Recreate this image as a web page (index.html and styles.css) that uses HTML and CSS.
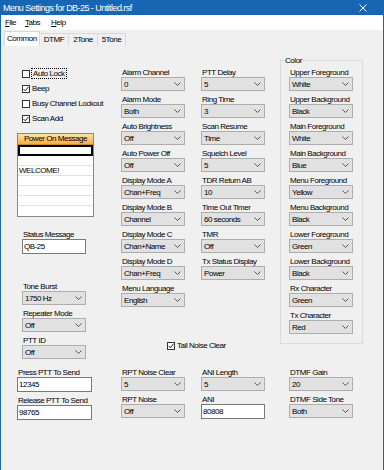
FILE: index.html
```html
<!DOCTYPE html>
<html lang="en">
<head>
  <meta charset="UTF-8">
  <meta name="viewport" content="width=device-width, initial-scale=1.0">
  <title>Menu Settings for DB-25</title>
  <link rel="stylesheet" href="styles.css">
</head>
<body>
  <div class="window">
    <div class="titlebar">
      <span class="title">Menu Settings for DB-25 - Untitled.rsf</span>
      <svg class="close" width="8" height="8" viewBox="0 0 8 8"><path d="M0.5 0.5L7.5 7.5M7.5 0.5L0.5 7.5" stroke="#fff" stroke-width="1"/></svg>
    </div>
    <div class="menubar">
      <span class="menu-file"><u>F</u>ile</span>
      <span class="menu-tabs"><u>T</u>abs</span>
      <span><u>H</u>elp</span>
    </div>
    <div class="tabs">
      <span class="tab active">Common</span>
      <span class="tab">DTMF</span>
      <span class="tab">2Tone</span>
      <span class="tab">5Tone</span>
    </div>

    <div class="page">
      <div class="grid">
        <!-- left column -->
        <div class="col left">
          <div class="check"><span class="box"></span><span class="focus">Auto Lock</span></div>
          <div class="check"><span class="box"><svg width="6" height="6" viewBox="0 0 6 6"><polyline points="0.5,3 2.3,4.8 5.5,0.8" fill="none" stroke="#222" stroke-width="1"/></svg></span>Beep</div>
          <div class="check"><span class="box"></span>Busy Channel Lockout</div>
          <div class="check"><span class="box"><svg width="6" height="6" viewBox="0 0 6 6"><polyline points="0.5,3 2.3,4.8 5.5,0.8" fill="none" stroke="#222" stroke-width="1"/></svg></span>Scan Add</div>

          <div class="listbox">
            <div class="listbox-head">Power On Message</div>
            <div class="listbox-edit"></div>
            <div class="listbox-row"></div>
            <div class="listbox-row">WELCOME!</div>
            <div class="listbox-row"></div>
            <div class="listbox-row"></div>
            <div class="listbox-row"></div>
            <div class="listbox-row"></div>
          </div>

          <div class="field status">
            <span class="lbl">Status Message</span>
            <div class="input">QB-25</div>
          </div>
          <div class="field burst">
            <span class="lbl">Tone Burst</span>
            <div class="select"><span>1750 Hz</span><svg class="chev" width="7" height="4" viewBox="0 0 7 4"><polyline points="0.5,0.5 3.5,3.5 6.5,0.5" fill="none" stroke="#555"/></svg></div>
          </div>
          <div class="field">
            <span class="lbl">Repeater Mode</span>
            <div class="select"><span>Off</span><svg class="chev" width="7" height="4" viewBox="0 0 7 4"><polyline points="0.5,0.5 3.5,3.5 6.5,0.5" fill="none" stroke="#555"/></svg></div>
          </div>
          <div class="field">
            <span class="lbl">PTT ID</span>
            <div class="select"><span>Off</span><svg class="chev" width="7" height="4" viewBox="0 0 7 4"><polyline points="0.5,0.5 3.5,3.5 6.5,0.5" fill="none" stroke="#555"/></svg></div>
          </div>
        </div>

        <!-- middle column -->
        <div class="col mid" id="colMid"></div>

        <!-- right column -->
        <div class="col mid" id="colRight"></div>

        <!-- color group -->
        <fieldset class="color">
          <legend>Color</legend>
          <div id="colColor"></div>
        </fieldset>
      </div>

      <div class="grid bottom">
        <div class="col">
          <div class="field wide">
            <span class="lbl">Press PTT To Send</span>
            <div class="input">12345</div>
          </div>
          <div class="field wide">
            <span class="lbl">Release PTT To Send</span>
            <div class="input">98765</div>
          </div>
        </div>
        <div class="col" id="botMid"></div>
        <div class="col">
          <div class="field">
            <span class="lbl">ANI Length</span>
            <div class="select"><span>5</span><svg class="chev" width="7" height="4" viewBox="0 0 7 4"><polyline points="0.5,0.5 3.5,3.5 6.5,0.5" fill="none" stroke="#555"/></svg></div>
          </div>
          <div class="field">
            <span class="lbl">ANI</span>
            <div class="input">80808</div>
          </div>
        </div>
        <div class="col dtmf" id="botDtmf"></div>
      </div>
    </div>
  </div>

  <script>
    // Combo boxes, label + current value
    const chevron = '<svg class="chev" width="7" height="4" viewBox="0 0 7 4"><polyline points="0.5,0.5 3.5,3.5 6.5,0.5" fill="none" stroke="#555"/></svg>';

    function combo(label, value) {
      return `<div class="field"><span class="lbl">${label}</span><div class="select"><span>${value}</span>${chevron}</div></div>`;
    }

    function fill(id, items) {
      document.getElementById(id).innerHTML = items.map(i => combo(i[0], i[1])).join('');
    }

    fill('colMid', [
      ['Alarm Channel', '0'],
      ['Alarm Mode', 'Both'],
      ['Auto Brightness', 'Off'],
      ['Auto Power Off', 'Off'],
      ['Display Mode A', 'Chan+Freq'],
      ['Display Mode B', 'Channel'],
      ['Display Mode C', 'Chan+Name'],
      ['Display Mode D', 'Chan+Freq'],
      ['Menu Language', 'English']
    ]);

    fill('colRight', [
      ['PTT Delay', '5'],
      ['Ring Time', '3'],
      ['Scan Resume', 'Time'],
      ['Squelch Level', '5'],
      ['TDR Return AB', '10'],
      ['Time Out Timer', '60 seconds'],
      ['TMR', 'Off'],
      ['Tx Status Display', 'Power']
    ]);

    fill('colColor', [
      ['Upper Foreground', 'White'],
      ['Upper Background', 'Black'],
      ['Main Foreground', 'White'],
      ['Main Background', 'Blue'],
      ['Menu Foreground', 'Yellow'],
      ['Menu Background', 'Black'],
      ['Lower Foreground', 'Green'],
      ['Lower Background', 'Black'],
      ['Rx Character', 'Green'],
      ['Tx Character', 'Red']
    ]);

    fill('botMid', [
      ['RPT Noise Clear', '5'],
      ['RPT Noise', 'Off']
    ]);

    fill('botDtmf', [
      ['DTMF Gain', '20'],
      ['DTMF Side Tone', 'Both']
    ]);

    // Tail Noise Clear sits under the middle column
    const tail = document.createElement('div');
    tail.className = 'check tail';
    tail.innerHTML = '<span class="box"><svg width="6" height="6" viewBox="0 0 6 6"><polyline points="0.5,3 2.3,4.8 5.5,0.8" fill="none" stroke="#222" stroke-width="1"/></svg></span>Tail Noise Clear';
    document.getElementById('colMid').appendChild(tail);
  </script>
</body>
</html>
```

FILE: styles.css
```css
* {
  box-sizing: border-box;
}
body {
  margin: 0;
  background: #f0f0f0;
  font-family: "Liberation Sans", Arial, sans-serif;
  font-size: 8px;
  letter-spacing: -0.45px;
  color: #000;
}
.window {
  width: 384px;
  height: 470px;
  border-left: 1px solid #1666b4;
  border-right: 1px solid #1666b4;
  display: flex;
  flex-direction: column;
  overflow: hidden;
}
.titlebar {
  height: 15px;
  background: #1666b4;
  color: #fff;
  display: flex;
  align-items: center;
  justify-content: space-between;
  padding: 0 16px 0 2px;
}
.title {
  font-size: 9px;
  letter-spacing: -0.55px;
}
.menubar {
  height: 15px;
  background: #fff;
  display: flex;
  align-items: center;
  padding-left: 4px;
}
.menu-file {
  width: 20px;
}
.menu-tabs {
  width: 26px;
}
.tabs {
  height: 16px;
  display: flex;
  align-items: flex-end;
  padding-left: 3px;
}
.tab {
  height: 13px;
  line-height: 12px;
  padding: 0 4px;
  border: 1px solid #d9d9d9;
  border-bottom: none;
  margin-right: -1px;
}
.tab.active {
  height: 15px;
  line-height: 14px;
  padding: 0 2px;
  background: #fff;
}
.page {
  flex: 1;
  padding: 10px 0 0 16px;
}
.grid {
  display: grid;
  grid-template-columns: 104px 80px 79px 83px;
  align-items: start;
}
.left {
  margin-top: 10px;
}
.mid {
  margin-top: 12px;
}
.check {
  display: flex;
  align-items: center;
  height: 15px;
  white-space: nowrap;
}
.left .check {
  margin-left: 5px;
}
.box {
  width: 8px;
  height: 8px;
  border: 1px solid #333;
  background: #fff;
  margin-right: 2px;
  display: flex;
  align-items: center;
  justify-content: center;
}
.focus {
  outline: 1px dotted #000;
  padding: 0 1px;
  line-height: 9px;
}
.tail {
  height: 11px;
  margin-top: 33px;
  margin-left: 46px;
}
.listbox {
  width: 77px;
  margin-top: 7px;
  border: 1px solid #828790;
  background: #fff;
}
.listbox-head {
  height: 11px;
  line-height: 10px;
  text-align: center;
  background: linear-gradient(#fde2ae, #f2b045);
  border-bottom: 1px solid #c98a2e;
}
.listbox-edit {
  height: 11px;
  border: 2px solid #000;
}
.listbox-row {
  height: 10px;
  line-height: 10px;
  padding-left: 1px;
  border-bottom: 1px solid #e2e2e2;
}
.listbox-row:last-child {
  border-bottom: none;
}
.field {
  margin-bottom: 4px;
}
.left .field {
  margin-left: 5px;
}
.status {
  margin-top: 13px;
}
.burst {
  margin-top: 28px;
}
.lbl {
  display: block;
  height: 9px;
  line-height: 9px;
  padding-left: 1px;
  white-space: nowrap;
}
.select {
  width: 64px;
  height: 14px;
  border: 1px solid #adadad;
  background: #e1e1e1;
  display: flex;
  align-items: center;
  justify-content: space-between;
  padding: 0 3px 0 2px;
  white-space: nowrap;
}
.input {
  width: 64px;
  height: 15px;
  line-height: 13px;
  border: 1px solid #7a7a7a;
  background: #fff;
  padding-left: 1px;
}
.wide .input {
  width: 75px;
}
.color {
  margin: 0;
  min-width: 0;
  padding: 3px 0 5px 8px;
  border: 1px solid #dcdcdc;
}
.color legend {
  padding: 0 1px;
  margin-left: -5px;
  line-height: 9px;
}
.bottom {
  margin-top: 5px;
}
.dtmf {
  padding-left: 9px;
}
```
